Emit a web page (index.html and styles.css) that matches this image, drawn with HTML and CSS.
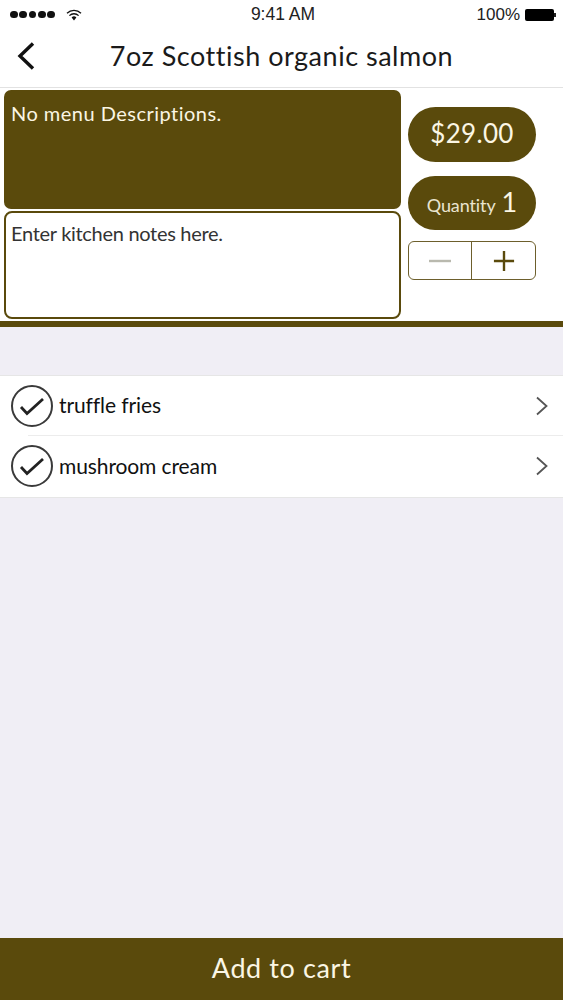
FILE: index.html
```html
<!DOCTYPE html>
<html lang="en">
<head>
<meta charset="utf-8">
<title>7oz Scottish organic salmon</title>
<link rel="stylesheet" href="styles.css">
</head>
<body>
<div class="page">
  <div class="status">
    <div class="status-left">
      <span class="dots"><i></i><i></i><i></i><i></i><i></i></span>
      <svg class="wifi" width="16" height="12" viewBox="0 0 16 12"><path d="M1 4.2a10 10 0 0 1 14 0M3.4 6.6a6.6 6.6 0 0 1 9.2 0" fill="none" stroke="#111" stroke-width="1.3"/><path d="M5.6 8.5a3.4 3.4 0 0 1 4.8 0L8 11.4z" fill="#111"/></svg>
    </div>
    <div class="status-time">9:41 AM</div>
    <div class="status-right">
      <span>100%</span>
      <span class="battery"></span><span class="battery-tip"></span>
    </div>
  </div>
  <header class="nav">
    <svg class="back" width="20" height="30" viewBox="0 0 20 30"><path d="M17 2.5 4 15l13 12.5" fill="none" stroke="#111" stroke-width="3.4"/></svg>
    <h1 class="title">7oz Scottish organic salmon</h1>
  </header>
  <section class="top">
    <div class="left">
      <div class="desc">No menu Descriptions.</div>
      <div class="notes">Enter kitchen notes here.</div>
    </div>
    <div class="right">
      <div class="pill price">$29.00</div>
      <div class="pill qty"><span class="qty-label">Quantity</span><span class="qty-num">1</span></div>
      <div class="stepper">
        <div class="step">
          <svg width="24" height="24" viewBox="0 0 24 24"><path d="M1 12h22" stroke="#b9b9ae" stroke-width="2.4"/></svg>
        </div>
        <div class="step step-plus">
          <svg width="22" height="22" viewBox="0 0 24 24"><path d="M1 12h22M12 1v22" stroke="#5a4a0c" stroke-width="2.6"/></svg>
        </div>
      </div>
    </div>
  </section>
  <div class="rule"></div>
  <main class="content">
    <ul class="list">
      <li class="row">
        <svg class="check" width="44" height="44" viewBox="0 0 44 44"><circle cx="22" cy="22" r="20" fill="none" stroke="#3a3a3a" stroke-width="2"/><path d="M11 23l6 6.5L33 15" fill="none" stroke="#222" stroke-width="2.8"/></svg>
        <span class="row-label">truffle fries</span>
        <svg class="chev" width="14" height="20" viewBox="0 0 14 20"><path d="M2 1.5 11.5 10 2 18.5" fill="none" stroke="#555" stroke-width="1.8"/></svg>
      </li>
      <li class="row">
        <svg class="check" width="44" height="44" viewBox="0 0 44 44"><circle cx="22" cy="22" r="20" fill="none" stroke="#3a3a3a" stroke-width="2"/><path d="M11 23l6 6.5L33 15" fill="none" stroke="#222" stroke-width="2.8"/></svg>
        <span class="row-label">mushroom cream</span>
        <svg class="chev" width="14" height="20" viewBox="0 0 14 20"><path d="M2 1.5 11.5 10 2 18.5" fill="none" stroke="#555" stroke-width="1.8"/></svg>
      </li>
    </ul>
  </main>
  <footer class="cart">Add to cart</footer>
</div>
</body>
</html>
```
FILE: styles.css
```css
* { box-sizing: border-box; }
html, body { margin: 0; padding: 0; }
body { font-family: "Lato", "Noto Sans", sans-serif; background: #fff; color: #111; }
.page { width: 563px; height: 1000px; display: flex; flex-direction: column; overflow: hidden; background: #f0eef5; }

.status { height: 29px; background: #fff; display: grid; grid-template-columns: 1fr auto 1fr; align-items: center; padding: 0 7px 0 10px; font-family: "Liberation Sans", sans-serif; font-size: 17px; color: #222; }
.status-left { display: flex; align-items: center; gap: 11px; }
.status-time { font-size: 17.5px; }
.dots { display: flex; gap: 1.5px; }
.dots i { width: 7.8px; height: 7.8px; border-radius: 50%; background: #111; }
.status-right { display: flex; align-items: center; justify-content: flex-end; gap: 5px; }
.battery { width: 29px; height: 12px; background: #000; border-radius: 2px; }
.battery-tip { width: 2px; height: 4px; margin-left: -5px; background: #222; }

.nav { height: 59px; background: #fff; border-bottom: 1px solid #e2e2e2; display: flex; align-items: center; position: relative; padding: 0 0 4px 16px; }
.title { position: absolute; left: 0; right: 0; top: 10px; margin: 0; text-align: center; font-size: 27px; font-weight: 400; letter-spacing: 0.52px; color: #1a1a1a; line-height: 34px; }

.top { height: 233px; background: #fff; display: flex; padding: 2px 27px 0 4px; gap: 7px; }
.left { width: 397px; display: flex; flex-direction: column; gap: 2px; }
.desc { height: 119px; background: #5a4a0c; border-radius: 7px; color: #fbf6e4; font-size: 20px; padding: 10px 7px; line-height: 26px; letter-spacing: 0.48px; }
.notes { height: 108px; background: #fff; border: 2.5px solid #5a4a0c; border-radius: 8px; color: #333; font-size: 20px; padding: 6.5px 5px; line-height: 26px; letter-spacing: -0.3px; }

.right { width: 128px; display: flex; flex-direction: column; padding-top: 17px; }
.pill { background: #5a4a0c; color: #fbf6e4; border-radius: 28px; display: flex; align-items: center; justify-content: center; }
.price { height: 55px; font-size: 26px; letter-spacing: 0.3px; padding-bottom: 4px; }
.qty { height: 54px; margin-top: 14px; gap: 6px; }
.qty-label { font-size: 18px; padding-top: 4px; opacity: .9; letter-spacing: -0.1px; }
.qty-num { font-size: 27px; padding-bottom: 4px; }
.stepper { height: 39px; margin-top: 11px; border: 1.5px solid #6d5f2c; border-radius: 6px; display: flex; }
.step { width: 62px; display: flex; align-items: center; justify-content: center; }
.step-plus { flex: 1; border-left: 1.5px solid #6d5f2c; }

.rule { height: 6px; background: #5a4a0c; flex: none; }
.content { flex: 1; padding-top: 48px; }
.list { list-style: none; margin: 0; padding: 0; background: #fff; border-top: 1px solid #e6e6e6; border-bottom: 1px solid #e6e6e6; }
.row { height: 60px; display: flex; align-items: center; padding: 0 14px 1px 10px; gap: 5px; position: relative; }
.row + .row { height: 61px; }
.row + .row::before { content: ""; position: absolute; left: 28px; right: 0; top: -1px; height: 1px; background: #ececec; }
.row-label { flex: 1; font-size: 21px; letter-spacing: -0.1px; color: #111; padding-bottom: 2px; }

.cart { height: 62px; flex: none; background: #5a4a0c; color: #fbf6e4; display: flex; align-items: center; justify-content: center; font-size: 27px; letter-spacing: 0.6px; padding-bottom: 3px; }
```
